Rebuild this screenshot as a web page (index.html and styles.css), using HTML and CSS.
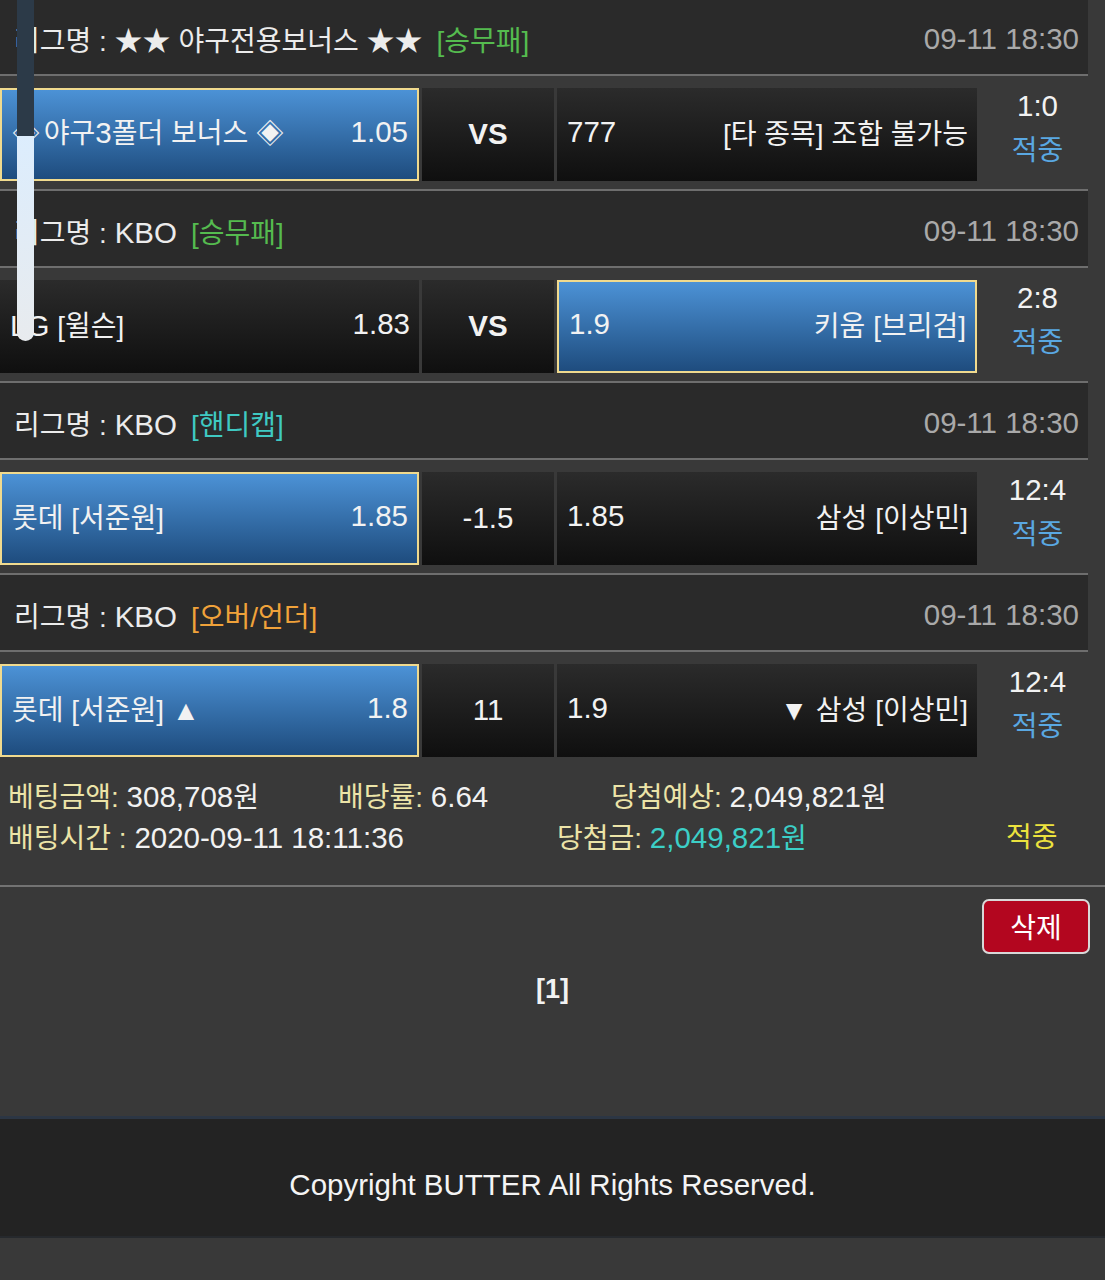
FILE: index.html
```html
<!DOCTYPE html>
<html lang="ko">
<head>
<meta charset="utf-8">
<title>베팅내역</title>
<link rel="stylesheet" href="styles.css">
</head>
<body>
<div class="page">
  <div class="list">
    <div class="game">
      <div class="league">
        <span class="lname">리그명 : ★★ 야구전용보너스 ★★</span><span class="type green">[승무패]</span>
        <span class="date n">09-11 18:30</span>
      </div>
      <div class="bet">
        <div class="cell side sel"><span><span class="dia">◈</span> 야구<span class="n">3</span>폴더 보너스 ◈</span><span class="n">1.05</span></div>
        <div class="cell mid vs n">VS</div>
        <div class="cell side"><span class="n">777</span><span>[타 종목] 조합 불가능</span></div>
        <div class="result"><div class="n">1:0</div><div class="hit">적중</div></div>
      </div>
    </div>
    <div class="game">
      <div class="league">
        <span class="lname">리그명 : <span class="n">KBO</span></span><span class="type green">[승무패]</span>
        <span class="date n">09-11 18:30</span>
      </div>
      <div class="bet">
        <div class="cell side"><span><span class="n">LG</span> [윌슨]</span><span class="n">1.83</span></div>
        <div class="cell mid vs n">VS</div>
        <div class="cell side sel"><span class="n">1.9</span><span>키움 [브리검]</span></div>
        <div class="result"><div class="n">2:8</div><div class="hit">적중</div></div>
      </div>
    </div>
    <div class="game">
      <div class="league">
        <span class="lname">리그명 : <span class="n">KBO</span></span><span class="type teal">[핸디캡]</span>
        <span class="date n">09-11 18:30</span>
      </div>
      <div class="bet">
        <div class="cell side sel"><span>롯데 [서준원]</span><span class="n">1.85</span></div>
        <div class="cell mid n">-1.5</div>
        <div class="cell side"><span class="n">1.85</span><span>삼성 [이상민]</span></div>
        <div class="result"><div class="n">12:4</div><div class="hit">적중</div></div>
      </div>
    </div>
    <div class="game last">
      <div class="league">
        <span class="lname">리그명 : <span class="n">KBO</span></span><span class="type orange">[오버/언더]</span>
        <span class="date n">09-11 18:30</span>
      </div>
      <div class="bet">
        <div class="cell side sel"><span>롯데 [서준원] ▲</span><span class="n">1.8</span></div>
        <div class="cell mid n">11</div>
        <div class="cell side"><span class="n">1.9</span><span>▼ 삼성 [이상민]</span></div>
        <div class="result"><div class="n">12:4</div><div class="hit">적중</div></div>
      </div>
    </div>
  </div>

  <div class="summary">
    <div class="srow">
      <div class="s1"><span class="lbl">베팅금액:</span> <span class="n">308,708</span>원</div>
      <div class="s2"><span class="lbl">배당률:</span> <span class="n">6.64</span></div>
      <div class="s3"><span class="lbl">당첨예상:</span> <span class="n">2,049,821</span>원</div>
    </div>
    <div class="srow">
      <div class="t1"><span class="lbl">배팅시간 :</span> <span class="n">2020-09-11 18:11:36</span></div>
      <div class="t2"><span class="lbl">당첨금:</span> <span class="win"><span class="n">2,049,821</span>원</span></div>
      <div class="t3 yes">적중</div>
    </div>
  </div>

  <div class="actions"><button class="del">삭제</button></div>
  <div class="pager">[1]</div>

  <footer class="footer">Copyright BUTTER All Rights Reserved.</footer>
  <div class="tail"></div>

  <div class="scroll"><div class="track"></div><div class="thumb"></div></div>
</div>
</body>
</html>
```

FILE: styles.css
```css
* { box-sizing: border-box; }
html, body { margin: 0; padding: 0; background: #393939; }
body {
  font-family: "Liberation Sans", "Noto Sans CJK KR", Arial, sans-serif;
  font-size: 28px;
  color: #f2f2f2;
}
.n { font-size: 29.5px; }
.dia { letter-spacing: -4px; }
.page { position: relative; width: 1105px; }
.list { width: 1088px; }

.league {
  height: 77px;
  background: #2a2a2a;
  border-bottom: 2px solid #6e6e6e;
  display: flex;
  align-items: center;
  padding: 4px 9px 0 14px;
  white-space: nowrap;
}
.game:first-child .league { height: 76px; padding-top: 3px; }
.lname { color: #ececec; }
.type { margin-left: 14px; }
.green { color: #55bb4f; }
.teal { color: #3fc9c2; }
.orange { color: #f0a23a; }
.date { margin-left: auto; color: #a9a9a9; }

.bet {
  display: flex;
  padding: 12px 0 8px;
  border-bottom: 2px solid #6e6e6e;
  background: #393939;
}
.game.last .bet { border-bottom: none; }

.cell {
  height: 93px;
  background: linear-gradient(#2b2b2b, #0f0f0f);
  display: flex;
  align-items: center;
  white-space: nowrap;
}
.side {
  width: 420px;
  justify-content: space-between;
  padding: 0 9px 5px 10px;
}
.cell.side:first-child { width: 419px; }
.mid {
  width: 132px;
  margin: 0 3px;
  justify-content: center;
  padding-bottom: 2px;
}
.vs { font-weight: bold; }
.sel {
  background: linear-gradient(#4c92d6, #1e4c7e);
  border: 2px solid #f0da8e;
}
.result {
  width: 111px;
  margin-top: -3px;
  padding-left: 10px;
  text-align: center;
  line-height: 42px;
}
.hit { color: #5aa8e2; padding-top: 3px; }

.summary {
  padding: 12px 8px 26px;
  border-bottom: 2px solid #737373;
  line-height: 40px;
  white-space: nowrap;
}
.srow { display: flex; }
.lbl { color: #ece4a8; }
.s1 { width: 330px; }
.s2 { width: 273px; }
.t1 { width: 549px; }
.t2 { width: 449px; }
.win { color: #3ccfc7; }
.yes { color: #ece23e; }

.actions {
  display: flex;
  justify-content: flex-end;
  padding: 12px 15px 0 0;
}
.del {
  width: 108px;
  height: 55px;
  background: #b3061f;
  border: 2px solid #d8d8d8;
  border-radius: 7px;
  color: #fff;
  font-family: inherit;
  font-size: 28px;
  padding: 0 0 2px;
}
.pager {
  text-align: center;
  font-weight: bold;
  font-size: 27px;
  line-height: 32px;
  margin-top: 19px;
  height: 32px;
}
.footer {
  margin-top: 111px;
  background: #232323;
  border-top: 3px solid #2c3644;
  border-bottom: 2px solid #26292d;
  height: 122px;
  padding-top: 46px;
  line-height: 40px;
  text-align: center;
  color: #f4f4f4;
  font-size: 29.5px;
}
.tail { height: 60px; }

.scroll {
  position: absolute;
  left: 17px;
  top: 0;
  width: 17px;
}
.track { height: 136px; background: #2c3a48; }
.thumb {
  height: 205px;
  background: linear-gradient(#dcedfd, #e8ebee);
  border-radius: 0 0 9px 9px;
}
```
